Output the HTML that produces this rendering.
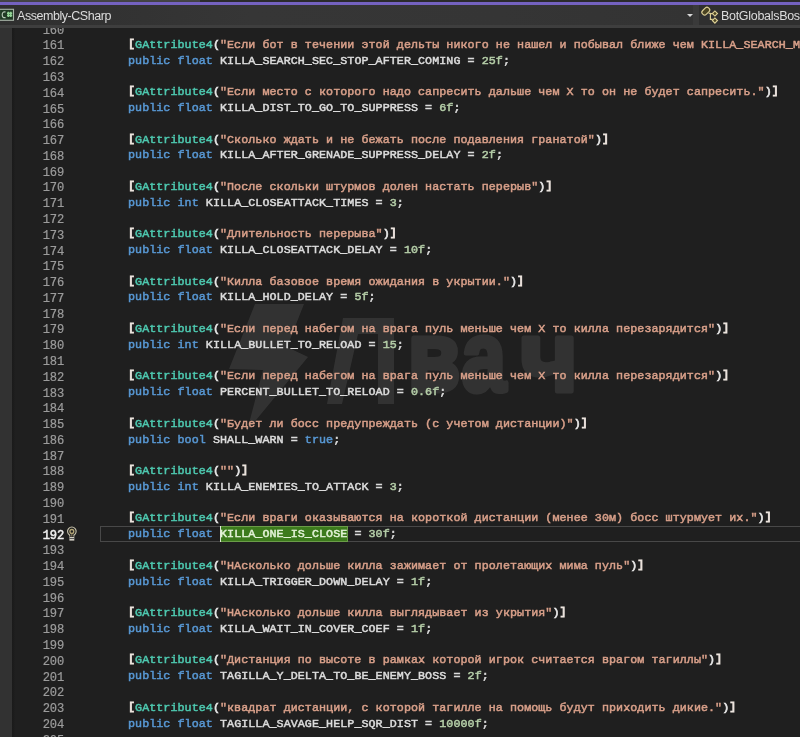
<!DOCTYPE html>
<html><head><meta charset="utf-8"><style>
*{margin:0;padding:0;box-sizing:border-box}
html,body{width:800px;height:737px;overflow:hidden;background:#1f1f1f}
body{position:relative;font-family:"Liberation Mono",monospace}
#top0{position:absolute;left:0;top:0;width:800px;height:2px;background:linear-gradient(90deg,#444 0,#444 200px,#2b2b2b 200px)}
#purple{position:absolute;left:0;top:2px;width:800px;height:3px;background:#7462c0;box-shadow:0 0 1px #3a3068}
#hdr{position:absolute;left:0;top:5px;width:800px;height:19.5px;background:linear-gradient(90deg,#2f2f2f 0,#363636 250px,#353535 500px,#333 693px,#3a3a3a 693px,#3a3a3a 699px,#2f2f2f 699px)}
#hdrb{position:absolute;left:0;top:24.5px;width:800px;height:3.5px;background:#3e3e3e}
#lm{position:absolute;left:0;top:28px;width:11.5px;height:709px;background:#323232}
#ed{position:absolute;left:12px;top:28px;width:788px;height:709px;overflow:hidden;background:linear-gradient(90deg,#1a1a1a 0,#1c1c1c 2px,#1f1f1f 3px)}
.ln,.cl{position:absolute;height:15.78px;line-height:15.78px;font-size:12.1px;letter-spacing:-0.180px;white-space:pre;-webkit-text-stroke:0.45px currentColor}
.ln{left:0;width:64.0px;text-align:right;color:#9c9c9c;-webkit-text-stroke:0.2px currentColor}
.ln.cur{color:#f0f0f0;-webkit-text-stroke:0.5px currentColor}
.cl{left:128.0px;color:#dcdcdc;font-size:11.7px;letter-spacing:0.060px;-webkit-text-stroke:0.5px currentColor}
.k{color:#5898d4} .t{color:#4ec9b0} .s{color:#d9a08a} .n{color:#b5cea8} .p{color:#e6e6e6;-webkit-text-stroke:0.7px currentColor} .br{position:relative;top:-1px;-webkit-text-stroke:0.9px currentColor;color:#ece4de} .i{color:#dcdcdc}
.sel{color:#e2f2d6}
#curline{position:absolute;left:99.5px;top:526.2px;width:720px;height:15.7px;border:1.5px solid #484848}
.hdrtxt{position:absolute;font-family:"Liberation Sans",sans-serif;font-size:13px;color:#dcdcdc;white-space:pre;will-change:transform}
</style></head><body>
<div id="top0"></div><div id="purple"></div><div id="hdr"></div><div id="hdrb"></div>
<div id="lm"></div>
<svg style="position:absolute;left:0;top:0" width="16" height="28" viewBox="0 0 16 28">
<rect x="-0.5" y="9.3" width="14" height="11" fill="#203a24" stroke="#a9b4a9" stroke-width="1.1"/>
<path d="M5.6 12 Q2.2 11.3 2.2 14.8 Q2.2 18.3 5.6 17.6" fill="none" stroke="#b9cbb9" stroke-width="1.2"/>
<path d="M7 13.3 H12.2 M7 15.5 H12.2 M8.4 11.8 V17 M10.8 11.8 V17" fill="none" stroke="#93d596" stroke-width="1.5"/>
</svg>
<div class="hdrtxt" style="left:17.4px;top:8.6px;font-size:12.5px;letter-spacing:-0.45px">Assembly-CSharp</div>
<div style="position:absolute;left:686.5px;top:14px;width:0;height:0;border-left:3px solid transparent;border-right:3px solid transparent;border-top:3.6px solid #d8d8d8"></div>

<svg style="position:absolute;left:698px;top:3px" width="24" height="24" viewBox="0 0 24 24">
<g fill="#4a4322" stroke="#dccf95" stroke-width="1.15">
<path d="M10.6 10.1 L14.7 10.7 M12.4 10.7 V16.3 H14.7" fill="none"/>
<rect x="3.55" y="5.55" width="8.5" height="5.2" rx="2.2" transform="rotate(-45 7.8 8.15)"/>
<rect x="15.1" y="8.7" width="3.6" height="3.6" transform="rotate(45 16.9 10.5)"/>
<rect x="15.1" y="15.8" width="3.6" height="3.6" transform="rotate(45 16.9 17.6)"/>
</g></svg>
<div class="hdrtxt" style="left:720.6px;top:8.6px;font-size:12.5px;letter-spacing:-0.3px">BotGlobalsBoss</div>
<div id="ed"><div style="position:absolute;left:-12px;top:-28px;width:800px;height:737px;will-change:transform">
<div class="ln" style="top:23.61px">160</div><div class="ln" style="top:39.39px">161</div><div class="ln" style="top:55.17px">162</div><div class="ln" style="top:70.95px">163</div><div class="ln" style="top:86.73px">164</div><div class="ln" style="top:102.51px">165</div><div class="ln" style="top:118.29px">166</div><div class="ln" style="top:134.07px">167</div><div class="ln" style="top:149.85px">168</div><div class="ln" style="top:165.63px">169</div><div class="ln" style="top:181.41px">170</div><div class="ln" style="top:197.19px">171</div><div class="ln" style="top:212.97px">172</div><div class="ln" style="top:228.75px">173</div><div class="ln" style="top:244.53px">174</div><div class="ln" style="top:260.31px">175</div><div class="ln" style="top:276.09px">176</div><div class="ln" style="top:291.87px">177</div><div class="ln" style="top:307.65px">178</div><div class="ln" style="top:323.43px">179</div><div class="ln" style="top:339.21px">180</div><div class="ln" style="top:354.99px">181</div><div class="ln" style="top:370.77px">182</div><div class="ln" style="top:386.55px">183</div><div class="ln" style="top:402.33px">184</div><div class="ln" style="top:418.11px">185</div><div class="ln" style="top:433.89px">186</div><div class="ln" style="top:449.67px">187</div><div class="ln" style="top:465.45px">188</div><div class="ln" style="top:481.23px">189</div><div class="ln" style="top:497.01px">190</div><div class="ln" style="top:512.79px">191</div><div class="ln cur" style="top:528.57px">192</div><div class="ln" style="top:544.35px">193</div><div class="ln" style="top:560.13px">194</div><div class="ln" style="top:575.91px">195</div><div class="ln" style="top:591.69px">196</div><div class="ln" style="top:607.47px">197</div><div class="ln" style="top:623.25px">198</div><div class="ln" style="top:639.03px">199</div><div class="ln" style="top:654.81px">200</div><div class="ln" style="top:670.59px">201</div><div class="ln" style="top:686.37px">202</div><div class="ln" style="top:702.15px">203</div><div class="ln" style="top:717.93px">204</div><div class="ln" style="top:733.71px">205</div>
<svg style="position:absolute;left:0;top:0" width="800" height="737" viewBox="0 0 800 737">
<g opacity="0.085" fill="#ffffff">
<polygon points="255,304 304,304 287,347 308,357 247,431 263,370 229,369"/>
<polygon points="343,318 394,318 394,404 378,404 378,334 358,334 342,404 327,404"/>
<g stroke="#ffffff" stroke-width="5" stroke-linejoin="round" font-family="Liberation Sans" font-weight="bold" font-size="100">
<text transform="translate(411 390.5) scale(0.86 1)" x="-4">в</text>
<text transform="translate(464 390.5) scale(0.80 1)" x="-3">а</text>
<text transform="translate(524 390.5)" x="-4">ч</text>
</g>
</g></svg>
<svg style="position:absolute;left:62px;top:522px" width="20" height="22" viewBox="0 0 20 22">
<path d="M7.9 14.7 L7.6 12.96 A4.3 4.3 0 1 1 12.1 12.96 L11.8 14.7" fill="none" stroke="#c4bfa8" stroke-width="1.15"/>
<circle cx="9.85" cy="9.4" r="1.9" fill="none" stroke="#b4a676" stroke-width="1.3"/>
<path d="M9.85 11.3 V14.6" stroke="#a89a70" stroke-width="0.9"/>
<rect x="7.4" y="15" width="4.9" height="3.6" fill="#d2cec4"/>
<rect x="7.4" y="16.1" width="4.9" height="0.8" fill="#3a3a3a"/>
</svg>
<div id="curline"></div>
<div style="position:absolute;left:219.6px;top:525.6px;width:128.6px;height:16.6px;background:#3c7a1c;border:1px solid #6a9c48"></div>
<div style="position:absolute;left:219.6px;top:526px;width:1.3px;height:15.8px;background:#dfe8d8"></div>
<div class="cl" style="top:38.00px"><span class="p br">[</span><span class="t">GAttribute4</span><span class="p">(</span><span class="s">"Если бот в течении этой дельты никого не нашел и побывал ближе чем KILLA_SEARCH_MAX_DIST"</span><span class="p">)</span><span class="p br">]</span></div><div class="cl" style="top:53.78px"><span class="k">public</span><span class="i"> </span><span class="k">float</span><span class="i"> KILLA_SEARCH_SEC_STOP_AFTER_COMING = </span><span class="n">25f</span><span class="i">;</span></div><div class="cl" style="top:85.34px"><span class="p br">[</span><span class="t">GAttribute4</span><span class="p">(</span><span class="s">"Если место с которого надо сапресить дальше чем X то он не будет сапресить."</span><span class="p">)</span><span class="p br">]</span></div><div class="cl" style="top:101.12px"><span class="k">public</span><span class="i"> </span><span class="k">float</span><span class="i"> KILLA_DIST_TO_GO_TO_SUPPRESS = </span><span class="n">6f</span><span class="i">;</span></div><div class="cl" style="top:132.68px"><span class="p br">[</span><span class="t">GAttribute4</span><span class="p">(</span><span class="s">"Сколько ждать и не бежать после подавления гранатой"</span><span class="p">)</span><span class="p br">]</span></div><div class="cl" style="top:148.46px"><span class="k">public</span><span class="i"> </span><span class="k">float</span><span class="i"> KILLA_AFTER_GRENADE_SUPPRESS_DELAY = </span><span class="n">2f</span><span class="i">;</span></div><div class="cl" style="top:180.02px"><span class="p br">[</span><span class="t">GAttribute4</span><span class="p">(</span><span class="s">"После скольки штурмов долен настать перерыв"</span><span class="p">)</span><span class="p br">]</span></div><div class="cl" style="top:195.80px"><span class="k">public</span><span class="i"> </span><span class="k">int</span><span class="i"> KILLA_CLOSEATTACK_TIMES = </span><span class="n">3</span><span class="i">;</span></div><div class="cl" style="top:227.36px"><span class="p br">[</span><span class="t">GAttribute4</span><span class="p">(</span><span class="s">"Длительность перерыва"</span><span class="p">)</span><span class="p br">]</span></div><div class="cl" style="top:243.14px"><span class="k">public</span><span class="i"> </span><span class="k">float</span><span class="i"> KILLA_CLOSEATTACK_DELAY = </span><span class="n">10f</span><span class="i">;</span></div><div class="cl" style="top:274.70px"><span class="p br">[</span><span class="t">GAttribute4</span><span class="p">(</span><span class="s">"Килла базовое время ожидания в укрытии."</span><span class="p">)</span><span class="p br">]</span></div><div class="cl" style="top:290.48px"><span class="k">public</span><span class="i"> </span><span class="k">float</span><span class="i"> KILLA_HOLD_DELAY = </span><span class="n">5f</span><span class="i">;</span></div><div class="cl" style="top:322.04px"><span class="p br">[</span><span class="t">GAttribute4</span><span class="p">(</span><span class="s">"Если перед набегом на врага пуль меньше чем X то килла перезарядится"</span><span class="p">)</span><span class="p br">]</span></div><div class="cl" style="top:337.82px"><span class="k">public</span><span class="i"> </span><span class="k">int</span><span class="i"> KILLA_BULLET_TO_RELOAD = </span><span class="n">15</span><span class="i">;</span></div><div class="cl" style="top:369.38px"><span class="p br">[</span><span class="t">GAttribute4</span><span class="p">(</span><span class="s">"Если перед набегом на врага пуль меньше чем X то килла перезарядится"</span><span class="p">)</span><span class="p br">]</span></div><div class="cl" style="top:385.16px"><span class="k">public</span><span class="i"> </span><span class="k">float</span><span class="i"> PERCENT_BULLET_TO_RELOAD = </span><span class="n">0.6f</span><span class="i">;</span></div><div class="cl" style="top:416.72px"><span class="p br">[</span><span class="t">GAttribute4</span><span class="p">(</span><span class="s">"Будет ли босс предупреждать (с учетом дистанции)"</span><span class="p">)</span><span class="p br">]</span></div><div class="cl" style="top:432.50px"><span class="k">public</span><span class="i"> </span><span class="k">bool</span><span class="i"> SHALL_WARN = </span><span class="k">true</span><span class="i">;</span></div><div class="cl" style="top:464.06px"><span class="p br">[</span><span class="t">GAttribute4</span><span class="p">(</span><span class="s">""</span><span class="p">)</span><span class="p br">]</span></div><div class="cl" style="top:479.84px"><span class="k">public</span><span class="i"> </span><span class="k">int</span><span class="i"> KILLA_ENEMIES_TO_ATTACK = </span><span class="n">3</span><span class="i">;</span></div><div class="cl" style="top:511.40px"><span class="p br">[</span><span class="t">GAttribute4</span><span class="p">(</span><span class="s">"Если враги оказываются на короткой дистанции (менее 30м) босс штурмует их."</span><span class="p">)</span><span class="p br">]</span></div><div class="cl" style="top:527.18px"><span class="k">public</span><span class="i"> </span><span class="k">float</span><span class="i"> </span><span class="sel">KILLA_ONE_IS_CLOSE</span><span class="i"> = </span><span class="n">30f</span><span class="i">;</span></div><div class="cl" style="top:558.74px"><span class="p br">[</span><span class="t">GAttribute4</span><span class="p">(</span><span class="s">"НАсколько дольше килла зажимает от пролетающих мима пуль"</span><span class="p">)</span><span class="p br">]</span></div><div class="cl" style="top:574.52px"><span class="k">public</span><span class="i"> </span><span class="k">float</span><span class="i"> KILLA_TRIGGER_DOWN_DELAY = </span><span class="n">1f</span><span class="i">;</span></div><div class="cl" style="top:606.08px"><span class="p br">[</span><span class="t">GAttribute4</span><span class="p">(</span><span class="s">"НАсколько дольше килла выглядывает из укрытия"</span><span class="p">)</span><span class="p br">]</span></div><div class="cl" style="top:621.86px"><span class="k">public</span><span class="i"> </span><span class="k">float</span><span class="i"> KILLA_WAIT_IN_COVER_COEF = </span><span class="n">1f</span><span class="i">;</span></div><div class="cl" style="top:653.42px"><span class="p br">[</span><span class="t">GAttribute4</span><span class="p">(</span><span class="s">"Дистанция по высоте в рамках которой игрок считается врагом тагиллы"</span><span class="p">)</span><span class="p br">]</span></div><div class="cl" style="top:669.20px"><span class="k">public</span><span class="i"> </span><span class="k">float</span><span class="i"> TAGILLA_Y_DELTA_TO_BE_ENEMY_BOSS = </span><span class="n">2f</span><span class="i">;</span></div><div class="cl" style="top:700.76px"><span class="p br">[</span><span class="t">GAttribute4</span><span class="p">(</span><span class="s">"квадрат дистанции, с которой тагилле на помощь будут приходить дикие."</span><span class="p">)</span><span class="p br">]</span></div><div class="cl" style="top:716.54px"><span class="k">public</span><span class="i"> </span><span class="k">float</span><span class="i"> TAGILLA_SAVAGE_HELP_SQR_DIST = </span><span class="n">10000f</span><span class="i">;</span></div>
</div></div>
</body></html>
